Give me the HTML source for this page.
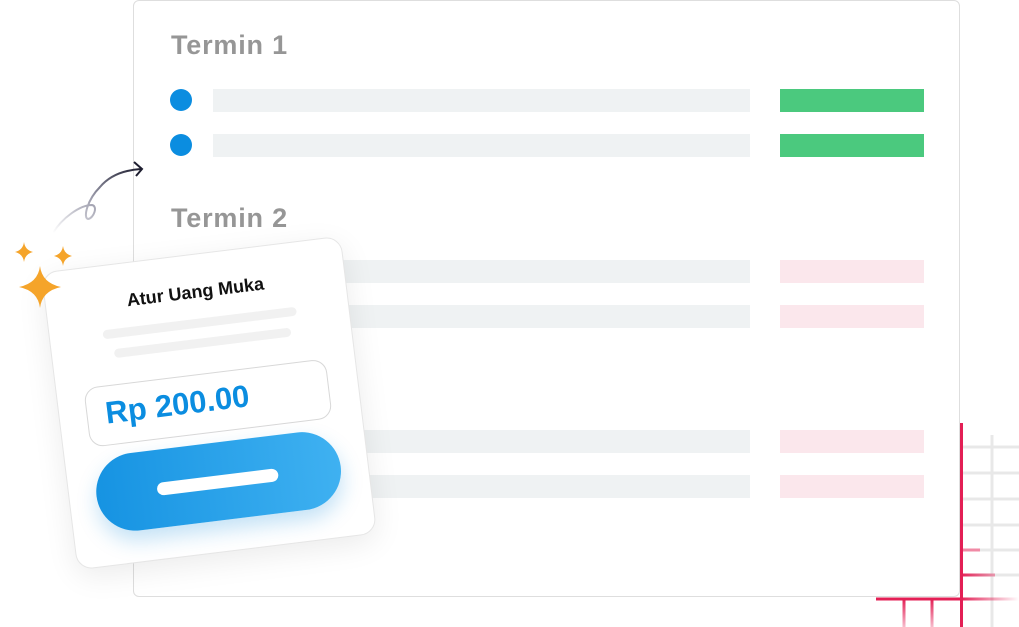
<!DOCTYPE html>
<html><head><meta charset="utf-8"><style>
body{margin:0;width:1019px;height:627px;background:#fff;position:relative;overflow:hidden;font-family:"Liberation Sans",sans-serif}
.a{position:absolute}
.panel{left:133px;top:0;width:825px;height:595px;border:1.5px solid #dedede;border-radius:6px;background:#fff}
.t{font-weight:bold;color:#969696;font-size:27px;letter-spacing:0.8px}
.g{background:#eff2f3;left:213px;width:537px;height:23px}
.gr{background:#4bc97e;left:780px;width:144px;height:23px}
.pk{background:#fbe7ec;left:780px;width:144px;height:23px}
.dot{width:22px;height:22px;border-radius:50%;background:#0b8de0;left:170px}
.card{left:58px;top:253px;width:300px;height:298px;background:#fff;border-radius:16px;border:1.5px solid #e6e6e6;transform:rotate(-7deg);box-shadow:0 8px 30px rgba(0,0,0,0.08)}
</style></head><body>
<div class="a panel"></div>
<div class="a t" style="left:171px;top:30px">Termin 1</div>
<div class="a t" style="left:171px;top:203px">Termin 2</div>
<div class="a dot" style="top:89px"></div><div class="a dot" style="top:134px"></div>
<div class="a g" style="top:89px"></div><div class="a g" style="top:134px"></div>
<div class="a gr" style="top:89px"></div><div class="a gr" style="top:134px"></div>
<div class="a g" style="top:260px"></div><div class="a g" style="top:305px"></div>
<div class="a pk" style="top:260px"></div><div class="a pk" style="top:305px"></div>
<div class="a g" style="top:430px"></div><div class="a g" style="top:475px"></div>
<div class="a pk" style="top:430px"></div><div class="a pk" style="top:475px"></div>
<svg class="a" style="left:860px;top:410px" width="159" height="217">
<defs><linearGradient id="fr" gradientUnits="userSpaceOnUse" x1="100" y1="0" x2="159" y2="0"><stop offset="0" stop-color="#e31f55"/><stop offset="1" stop-color="#e31f55" stop-opacity="0"/></linearGradient>
<linearGradient id="fd" gradientUnits="userSpaceOnUse" x1="0" y1="189" x2="0" y2="217"><stop offset="0" stop-color="#e31f55"/><stop offset="1" stop-color="#e31f55" stop-opacity="0.3"/></linearGradient></defs>
<g stroke="#e8e8e8" stroke-width="3">
<line x1="132" y1="25" x2="132" y2="217"/>
<line x1="103" y1="37" x2="159" y2="37"/><line x1="103" y1="63" x2="159" y2="63"/><line x1="103" y1="89" x2="159" y2="89"/><line x1="103" y1="115" x2="159" y2="115"/><line x1="103" y1="140" x2="159" y2="140"/><line x1="103" y1="165" x2="159" y2="165"/></g>
<line x1="103" y1="140" x2="120" y2="140" stroke="#f08aa5" stroke-width="3"/>
<line x1="103" y1="165" x2="135" y2="165" stroke="url(#fr)" stroke-width="3"/>
<line x1="16" y1="189" x2="159" y2="189" stroke="url(#fr)" stroke-width="3"/>
<line x1="16" y1="189" x2="102" y2="189" stroke="#e31f55" stroke-width="3"/>
<line x1="101.5" y1="13" x2="101.5" y2="217" stroke="#e31f55" stroke-width="3"/>
<line x1="44" y1="189" x2="44" y2="217" stroke="url(#fd)" stroke-width="3"/>
<line x1="72" y1="189" x2="72" y2="217" stroke="url(#fd)" stroke-width="3"/>
</svg>
<div class="a card">
<div class="a" style="left:0;right:0;top:27px;text-align:center;font-weight:bold;font-size:18px;color:#111">Atur Uang Muka</div>
<div class="a" style="left:53px;top:64px;width:195px;height:9px;border-radius:5px;background:#f1f1f1"></div>
<div class="a" style="left:62px;top:84px;width:178px;height:9px;border-radius:5px;background:#f1f1f1"></div>
<div class="a" style="left:27px;top:119px;width:244px;height:60px;border:1.5px solid #d8d8d8;border-radius:14px;box-sizing:border-box"></div>
<div class="a" style="left:46px;top:129px;font-weight:bold;font-size:31px;color:#0b8de0">Rp 200.00</div>
<div class="a" style="left:27px;top:189px;width:246px;height:78px;border-radius:40px;background:linear-gradient(90deg,#1693e2,#3fb1f1);box-shadow:0 10px 20px rgba(20,140,220,0.25)"></div>
<div class="a" style="left:88px;top:222px;width:122px;height:13px;border-radius:7px;background:#fff"></div>
</div>
<svg class="a" style="left:0;top:150px" width="160" height="160">
<defs><linearGradient id="ar" x1="0" y1="1" x2="1" y2="0"><stop offset="0" stop-color="#fff"/><stop offset="0.5" stop-color="#9a9aaa"/><stop offset="1" stop-color="#1e1e30"/></linearGradient></defs>
<path d="M53 83 C62 68 80 55 92 55 C98 56 94 68 88 69 C83 68 87 50 100 37 C110 25 125 20 141 19" fill="none" stroke="url(#ar)" stroke-width="2"/>
<path d="M134 12 L142 19 L136 26" fill="none" stroke="#1e1e30" stroke-width="2"/>
<g fill="#f5a42a">
<path d="M24 92 Q25 100 33 102 Q25 104 24 112 Q23 104 15 102 Q23 100 24 92Z"/>
<path d="M63 96 Q64 104 72 106 Q64 108 63 116 Q62 108 54 106 Q62 104 63 96Z"/>
<path d="M40 116 Q42 133 61 137 Q42 141 40 158 Q38 141 19 137 Q38 133 40 116Z"/>
</g></svg>
</body></html>
